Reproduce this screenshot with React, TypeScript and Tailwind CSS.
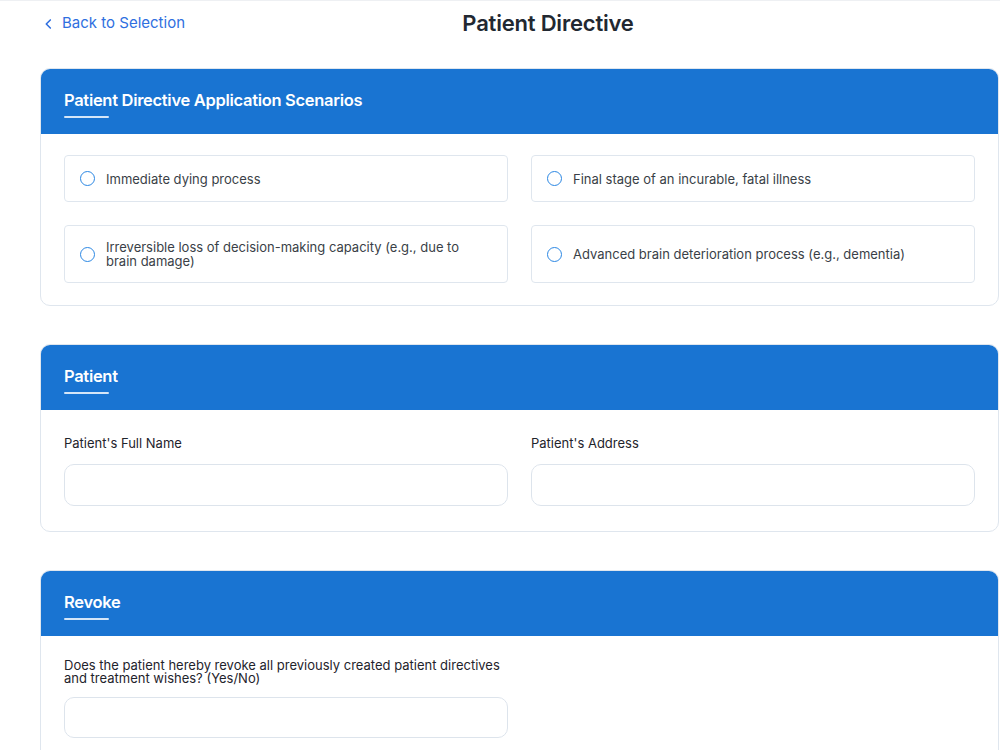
const scenarios = [
  'Immediate dying process',
  'Final stage of an incurable, fatal illness',
  'Irreversible loss of decision-making capacity (e.g., due to brain damage)',
  'Advanced brain deterioration process (e.g., dementia)',
]

function SectionCard({ title, children }: { title: string; children: React.ReactNode }) {
  return (
    <section className="rounded-[10px] border border-[#dfe6ee] bg-white overflow-hidden">
      <div className="bg-[#1974d2] h-[65px] px-[23px] pt-[20px]">
        <h2 className="text-white text-[16.5px] leading-[22px] font-semibold tracking-[-0.3px]">
          {title}
        </h2>
        <div className="mt-[5px] h-[2px] w-[45px] rounded-full bg-[#d5e6f8]" />
      </div>
      {children}
    </section>
  )
}

function TextField({ label }: { label: string }) {
  return (
    <div className="flex flex-col">
      <label className="text-[13px] leading-[13px] font-normal text-[#1f242c] min-h-[27px]">
        {label}
      </label>
      <input className="h-[42px] rounded-[10px] border border-[#dde4ec] bg-white outline-none px-3" />
    </div>
  )
}

export default function App() {
  return (
    <div
      className="min-h-screen bg-white border-t border-[#eef0f3]"
      style={{ fontFamily: 'Inter, "Noto Sans", sans-serif' }}
    >
      <div className="pl-[40px] pr-[1px]">
        <header className="flex items-center h-[45px]">
          <a className="flex shrink-0 items-center gap-[9px] whitespace-nowrap text-[#2f6fe0] text-[15px] w-[145px] pl-[4px]">
            <svg width="10" height="14" viewBox="0 0 10 14" fill="none">
              <path d="M7 2.5L2.5 7 7 11.5" stroke="currentColor" strokeWidth="1.7" strokeLinecap="round" strokeLinejoin="round" />
            </svg>
            Back to Selection
          </a>
          <h1 className="flex-1 text-center text-[22px] font-semibold text-[#222831] tracking-[-0.2px]">
            Patient Directive
          </h1>
          <div className="w-[88px] shrink-0" />
        </header>

        <div className="mt-[22px] flex flex-col gap-[38px] pb-10">
          <SectionCard title="Patient Directive Application Scenarios">
            <div className="grid grid-cols-2 gap-[23px] px-[23px] pt-[21px] pb-[22px]">
              {scenarios.map((s) => (
                <label
                  key={s}
                  className="flex items-center gap-[11px] rounded-[4px] border border-[#dfe6ee] px-[15px] py-[14px] min-h-[47px]"
                >
                  <span className="shrink-0 w-[15px] h-[15px] rounded-full border-[1.5px] border-[#2b87e3]" />
                  <span className="text-[13px] leading-[14px] text-[#3a3f47]">{s}</span>
                </label>
              ))}
            </div>
          </SectionCard>

          <SectionCard title="Patient">
            <div className="grid grid-cols-2 gap-x-[23px] px-[23px] pt-[27px] pb-[25px]">
              <TextField label="Patient's Full Name" />
              <TextField label="Patient's Address" />
            </div>
          </SectionCard>

          <SectionCard title="Revoke">
            <div className="grid grid-cols-2 gap-x-[23px] px-[23px] pt-[23px] pb-[24px]">
              <div className="flex flex-col">
                <label className="text-[13px] leading-[13px] font-normal text-[#1f242c] mb-[12px]">
                  Does the patient hereby revoke all previously created patient directives and treatment wishes? (Yes/No)
                </label>
                <input className="h-[41px] rounded-[10px] border border-[#dde4ec] bg-white outline-none px-3" />
              </div>
            </div>
          </SectionCard>
        </div>
      </div>
    </div>
  )
}
